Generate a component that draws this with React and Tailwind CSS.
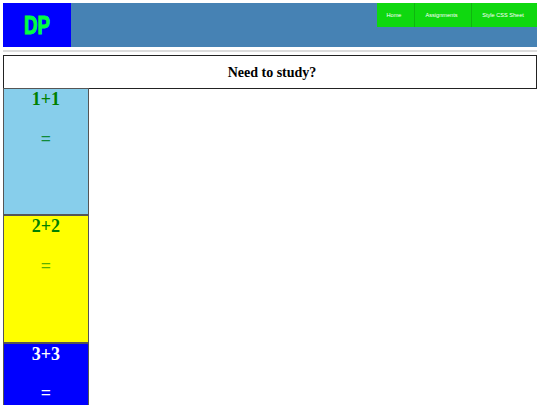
export default function App() {
  const cards = [
    ["bg-[#87ceeb]", "text-[#008000]", "1+1", "text-[#0f8a3a]"],
    ["bg-[#ffff00]", "text-[#008000]", "2+2", "text-[#5cb000]"],
    ["bg-[#0000ff]", "text-white", "3+3", "text-white"],
  ];
  const nav = [["Home", "w-[38px]"], ["Assignments", "w-[57px]"], ["Style CSS Sheet", "w-[65px]"]];
  return (
    <div className="h-[405px] w-[540px] overflow-hidden bg-white pt-[3px] px-[3px] font-['Liberation_Serif',serif]">
      <header className="flex h-[44px] bg-[#4682b4]">
        <div className="flex w-[68px] items-center justify-center bg-[#0000ff]">
          <span className="inline-block origin-center scale-x-[0.72] font-['Liberation_Sans',sans-serif] text-[26px] leading-none font-bold text-[#00ff40] [-webkit-text-stroke:1px_#00ff40]">DP</span>
        </div>
        <nav className="ml-auto flex h-[24px] font-['Liberation_Sans',sans-serif]">
          {nav.map(([t, w]) => (
            <a key={t} className={`flex ${w} items-center justify-center border-r border-[#0fb50f] bg-[#0fd80f] pr-[3px] text-[5.6px] whitespace-nowrap text-white last:border-r-0`}>{t}</a>
          ))}
        </nav>
      </header>
      <div className="mt-[3px] h-[2px] bg-[#dcdcdc]" />
      <div className="mt-[3px] flex h-[34px] items-center justify-center border border-[#222] pl-[4px] text-[14px] font-bold text-black">Need to study?</div>
      <div className="-mt-px w-[86px]">
        {cards.map(([bg, color, q, eq]) => (
          <div key={q} className={`h-[127.33px] border border-[#555] text-center text-[18px] font-bold ${bg}`}>
            <div className={`${color} leading-[20px]`}>{q}</div>
            <div className={`${eq} mt-[19.5px] leading-[20px]`}>=</div>
          </div>
        ))}
      </div>
    </div>
  );
}
